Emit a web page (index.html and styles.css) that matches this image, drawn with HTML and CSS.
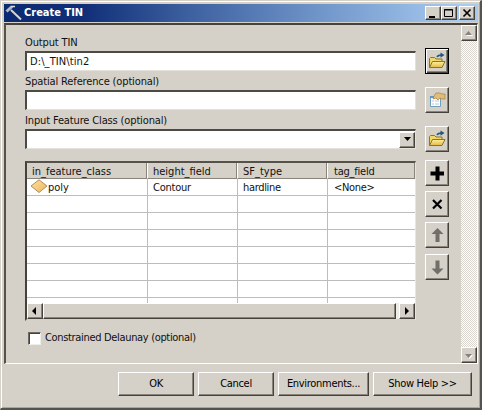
FILE: index.html
```html
<!DOCTYPE html>
<html lang="en">
<head>
<meta charset="utf-8">
<title>Create TIN</title>
<link rel="stylesheet" href="styles.css">
</head>
<body>
<svg class="defs" width="0" height="0">
  <defs>
    <linearGradient id="gold" x1="0" y1="0" x2="0" y2="1"><stop offset="0" stop-color="#fff0a0"/><stop offset="1" stop-color="#e2b840"/></linearGradient>
    <linearGradient id="diamond" x1="0" y1="0" x2="1" y2="1"><stop offset="0" stop-color="#ffe2a0"/><stop offset="1" stop-color="#eeb45c"/></linearGradient>
    <symbol id="folder" viewBox="0 0 18 18">
      <path d="M1.500 15.500V6.500l1-1h4l1.500 1.500h6v3" fill="#f3d76a" stroke="#8b7423"/>
      <path d="M1.500 15.500l3-6h12.500l-3 6z" fill="url(#gold)" stroke="#8b7423"/>
      <path d="M9 5c1-2 2.500-2 5-2" fill="none" stroke="#1f5878" stroke-width="1.500"/>
      <path d="M12.500 .5l4 2.500-4 2.700z" fill="#1f5878"/>
    </symbol>
  </defs>
</svg>
<main class="window">
  <header class="titlebar">
    <svg class="hammer" width="18" height="18" viewBox="0 0 18 18"><path d="M6 6l10 9.500" stroke="#d8d8d0" stroke-width="2"/><path d="M1.500 7.500L7 2.500" stroke="#aebbc4" stroke-width="3"/><path d="M6 2.500h4" stroke="#d8dee0" stroke-width="1.500"/></svg>
    <h1>Create TIN</h1>
    <div class="controls">
      <button class="raised"><svg width="12" height="11"><path d="M2 8h6v2H2z"/></svg></button>
      <button class="raised"><svg width="12" height="11"><path d="M1.500 1.500h8v7h-8zM1 2h9" fill="none" stroke="#000"/></svg></button>
      <button class="raised close"><svg width="12" height="11"><path d="M2.500 1.500l7 7m0-7l-7 7" stroke="#000" stroke-width="1.700"/></svg></button>
    </div>
  </header>
  <section class="client">
    <div class="form">
      <div class="fields">
        <label>Output TIN</label>
        <div class="input"><span class="path">D:\_TIN\tin2</span></div>
        <label>Spatial Reference (optional)</label>
        <div class="input"></div>
        <label>Input Feature Class (optional)</label>
        <div class="input"><button class="raised drop"><svg width="13" height="13"><path d="M3 4h7L6.500 8z"/></svg></button></div>
        <div class="table">
          <div class="row head"><div>in_feature_class</div><div>height_field</div><div>SF_type</div><div><span class="tight">tag_field</span></div></div>
          <div class="row"><div class="first"><svg width="18" height="16" viewBox="0 0 18 16"><path d="M1 7L9 .8 17 7l-8 6.500z" fill="url(#diamond)" stroke="#ad8e62"/></svg><span>poly</span></div><div><span class="tight">Contour</span></div><div><span class="tighter">hardline</span></div><div><span class="tighter">&lt;None&gt;</span></div></div>
          <div class="row"><div></div><div></div><div></div><div></div></div>
          <div class="row"><div></div><div></div><div></div><div></div></div>
          <div class="row"><div></div><div></div><div></div><div></div></div>
          <div class="row"><div></div><div></div><div></div><div></div></div>
          <div class="row"><div></div><div></div><div></div><div></div></div>
          <div class="row"><div></div><div></div><div></div><div></div></div>
          <div class="row last"><div></div><div></div><div></div><div></div></div>
          <div class="hscroll">
            <button class="raised"><svg width="12" height="12"><path d="M7 2v8L3 6z"/></svg></button>
            <div class="raised thumb"></div>
            <button class="raised"><svg width="12" height="12"><path d="M4 2v8l4-4z"/></svg></button>
          </div>
        </div>
        <div class="option"><i class="check"></i><span class="tighter">Constrained Delaunay (optional)</span></div>
      </div>
      <aside class="tools">
        <button class="raised focus"><svg width="18" height="18"><use href="#folder"/></svg></button>
        <button class="raised props"><svg width="18" height="18"><path d="M2.500 5.500h10v10h-10z" fill="#fff" stroke="#6f9fbd"/><path d="M2 5h11v2H2z" fill="#5d99cf"/><path d="M4 10h2m1 0h4M4 13h2m1 0h4" stroke="#b3c9d6"/><path d="M6 5l2-3h4l2 1h3v5h-3l-2-1-2 2-2-2-3 1z" fill="#e2bd78" stroke="#a47f43" stroke-width=".7"/></svg></button>
        <button class="raised browse"><svg width="18" height="18"><use href="#folder"/></svg></button>
        <button class="raised add"><svg width="18" height="18"><path d="M7.500 2.500h4v5H16v4h-4.500v5h-4v-5H2.500v-4h5z"/></svg></button>
        <button class="raised remove"><svg width="18" height="18"><path d="M5 5l8.500 8.500m0-8.500L5 13.500" stroke="#000" stroke-width="2.200"/></svg></button>
        <button class="raised up"><svg width="18" height="18"><path d="M9.500 2L15.500 8H11.500v8h-4V8h-4z" fill="#706f6a"/></svg></button>
        <button class="raised down"><svg width="18" height="18"><path d="M9.500 16.500L15.500 10.500h-4V2.500h-4v8h-4z" fill="#706f6a"/></svg></button>
      </aside>
    </div>
    <div class="vscroll">
      <button class="raised"><svg width="12" height="12"><path d="M3 9h7L6.500 5z" fill="#fff"/><path d="M2 8h7L5.500 4z" fill="#85837d"/></svg></button>
      <button class="raised"><svg width="12" height="12"><path d="M3 6h7L6.500 10z" fill="#fff"/><path d="M2 5h7L5.500 9z" fill="#85837d"/></svg></button>
    </div>
  </section>
  <footer>
    <button class="raised ok"><span>OK</span></button>
    <button class="raised cancel"><span>Cancel</span></button>
    <button class="raised env"><span>Environments...</span></button>
    <button class="raised help"><span>Show Help &gt;&gt;</span></button>
  </footer>
</main>
</body>
</html>
```
FILE: styles.css
```css
* { box-sizing: border-box; }
body { margin: 0; font: 11px/14px "DejaVu Sans Condensed", "DejaVu Sans", sans-serif; font-stretch: condensed; color: #111; background: #d5d0c8; overflow: hidden; }
svg { display: block; flex: none; }
.defs { position: absolute; }
button { margin: 0; padding: 0; font: inherit; color: #000; display: flex; align-items: center; justify-content: center; flex: none; }
span, label, h1 { white-space: nowrap; }
.window { width: 482px; height: 410px; background: #d5d0c8; border: 1px solid #d5d0c8; border-right: 2px solid #55534f; border-bottom: 2px solid #55534f; box-shadow: inset 1px 1px #fff, inset -1px -1px #aaa69e; padding: 3px 2px 0 3px; }
.raised { background: #d5d0c8; border: 1px solid; border-color: #fff #45423c #45423c #fff; box-shadow: inset -1px -1px #88847c; }
.titlebar { height: 18px; display: flex; align-items: center; background: linear-gradient(90deg, #0c2a72 0, #102f78 17%, #3b5e9e 38%, #6f94c8 66%, #a6caf0 96%); }
.hammer { margin-left: 1px; }
h1 { margin: 0 0 0 1px; font-size: 11px; line-height: 18px; color: #fff; font-weight: bold; }
.controls { display: flex; margin-left: auto; padding-right: 3px; }
.controls button { width: 16px; height: 14px; }
.controls .close { margin-left: 2px; }
.client { height: 341px; margin-top: 1px; border: solid; border-width: 2px 1px 1px 2px; border-color: #45423c #fff #fff #55524c; display: flex; }
.form { display: flex; flex: 1; padding-left: 19px; }
.fields { width: 391px; padding-top: 11px; }
label { display: block; height: 15px; letter-spacing: -.14px; }
.path { letter-spacing: .1px; }
.tight { letter-spacing: -.22px; }
.tighter { letter-spacing: -.33px; }
.input { height: 20px; background: #fff; border: 1px solid; border-width: 2px 1px 1px 2px; border-color: #4c4a46 #e4e1da #e4e1da #4c4a46; margin-bottom: 4px; display: flex; align-items: center; padding-left: 3px; }
.drop { width: 16px; height: 16px; margin-left: auto; }
.table { margin-top: 12px; height: 160px; width: 391px; background: #fff; border: 2px solid; border-color: #55524c #e8e5df #d5d0c8 #45423c; border-right-width: 1px; display: flex; flex-direction: column; }
.row { height: 17px; flex: none; display: grid; grid-template-columns: 121px 90px 90px 1fr; }
.row > div { border-right: 1px solid #bdbdbd; border-bottom: 1px solid #bdbdbd; padding-left: 5px; line-height: 17px; overflow: hidden; }
.row > div:last-child { border-right: 0; padding-left: 6px; }
.row > .first { display: flex; padding-left: 3px; }
.head { height: 16px; }
.head > div { background: #d5d0c8; border-right: 1px solid #fff; border-bottom-color: #88847c; box-shadow: inset -1px 0 #88847c; }
.last { height: 7px; flex: 1; }
.last > div { border-bottom: 0; }
.hscroll { display: flex; height: 16px; background: #eeece7; }
.hscroll button { width: 16px; }
.thumb { flex: 1; margin-right: 3px; }
.option { display: flex; align-items: center; margin: 10px 0 0 3px; height: 14px; }
.check { width: 13px; height: 13px; background: #fff; border: 1px solid; border-color: #6c6962 #eee #eee #6c6962; box-shadow: inset 1px 1px #45423c; margin-right: 4px; }
.tools { margin-left: 9px; width: 25px; padding-top: 23px; display: flex; flex-direction: column; }
.tools button { width: 24px; height: 26px; }
.tools .focus { border: 1px solid #000; box-shadow: inset 1px 1px #fff, inset -1px -1px #45423c, inset -2px -2px #88847c; outline: 1px solid #000; outline-offset: -1px; }
.tools .props, .tools .browse { margin-top: 13px; }
.tools .add { margin-top: 8px; }
.tools .remove, .tools .up { margin-top: 5px; }
.tools .down { margin-top: 6px; }
.vscroll { width: 16px; display: flex; flex-direction: column; justify-content: space-between; background: repeating-conic-gradient(#fff 0 25%, #dad6cf 0 50%) 0 0 / 2px 2px; }
.vscroll button { width: 16px; height: 16px; }
footer { display: flex; gap: 4px; padding: 8px 0 0 114px; letter-spacing: -.3px; }
footer button { height: 24px; width: 76px; letter-spacing: inherit; }
footer .env { width: 91px; }
footer .help { width: 99px; }
```
